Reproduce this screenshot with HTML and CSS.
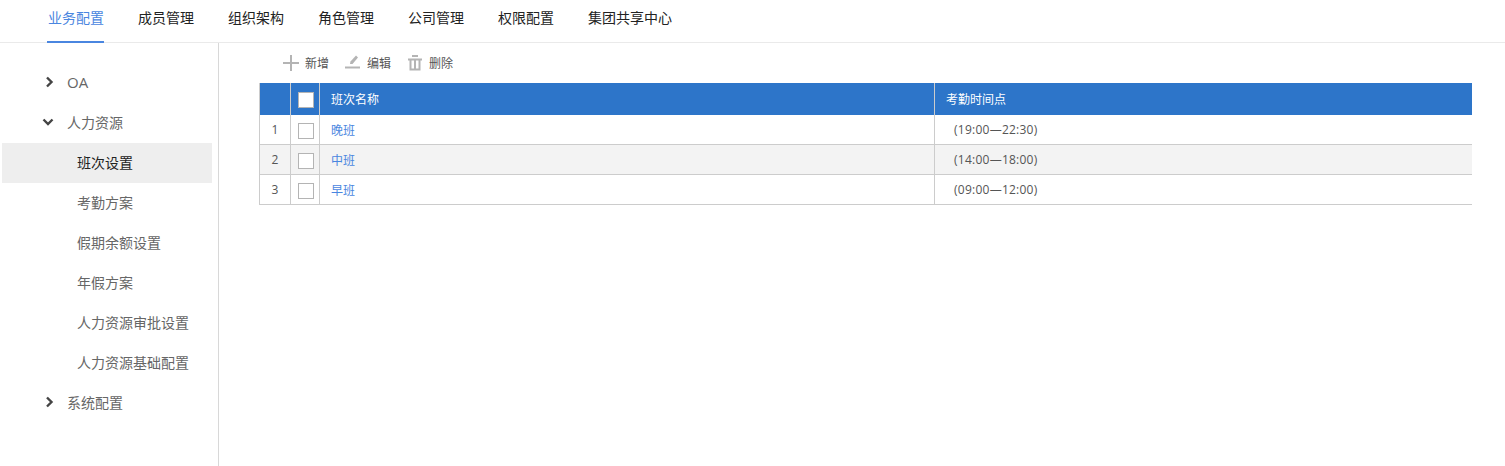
FILE: index.html
```html
<!DOCTYPE html>
<html lang="zh-CN">
<head>
<meta charset="utf-8">
<title>班次设置</title>
<link rel="stylesheet" href="styles.css">
</head>
<body>
<nav class="topnav">
  <a class="tab active">业务配置</a>
  <a class="tab">成员管理</a>
  <a class="tab">组织架构</a>
  <a class="tab">角色管理</a>
  <a class="tab">公司管理</a>
  <a class="tab">权限配置</a>
  <a class="tab">集团共享中心</a>
</nav>
<div class="layout">
  <aside class="sidebar">
    <div class="group"><svg class="chev" viewBox="0 0 12 12"><path d="M3 1.500 7.500 6 3 10.500"/></svg><span class="latin">OA</span></div>
    <div class="group"><svg class="chev down" viewBox="0 0 12 12"><path d="M1.500 3.500 6 8l4.500-4.500"/></svg><span>人力资源</span></div>
    <div class="item selected">班次设置</div>
    <div class="item">考勤方案</div>
    <div class="item">假期余额设置</div>
    <div class="item">年假方案</div>
    <div class="item">人力资源审批设置</div>
    <div class="item">人力资源基础配置</div>
    <div class="group"><svg class="chev" viewBox="0 0 12 12"><path d="M3 1.500 7.500 6 3 10.500"/></svg><span>系统配置</span></div>
  </aside>
  <main class="content">
    <div class="toolbar">
      <button class="tool"><svg viewBox="0 0 16 16"><path d="M8 0v16M0 8h16" class="ln"/></svg>新增</button>
      <button class="tool"><svg viewBox="0 0 16 16"><path d="M0 12.500h15" class="ln"/><path d="M5 9l.5-2.500L11 .5 13 2.500 7.500 9z" class="fl"/></svg>编辑</button>
      <button class="tool"><svg viewBox="0 0 16 16"><path d="M4 1h6M0 4.500h14M2.500 5v9.500h9V5M7 5v9" class="ln"/></svg>删除</button>
    </div>
    <table class="grid">
      <colgroup><col class="c-num"><col class="c-check"><col class="c-name"><col></colgroup>
      <thead>
        <tr><th></th><th class="center"><span class="box head"></span></th><th>班次名称</th><th>考勤时间点</th></tr>
      </thead>
      <tbody>
        <tr><td class="center">1</td><td class="center"><span class="box"></span></td><td><a class="link">晚班</a></td><td class="time">(19:00—22:30)</td></tr>
        <tr class="alt"><td class="center">2</td><td class="center"><span class="box"></span></td><td><a class="link">中班</a></td><td class="time">(14:00—18:00)</td></tr>
        <tr><td class="center">3</td><td class="center"><span class="box"></span></td><td><a class="link">早班</a></td><td class="time">(09:00—12:00)</td></tr>
      </tbody>
    </table>
  </main>
</div>
</body>
</html>
```
FILE: styles.css
```css
* { box-sizing: border-box; }
html, body { height: 100%; }
body {
  margin: 0;
  height: 466px;
  overflow: hidden;
  background: #fff;
  font-family: "Open Sans", "Noto Sans CJK SC", sans-serif;
  font-size: 14px;
  color: #666;
  display: flex;
  flex-direction: column;
}
.topnav {
  height: 43px;
  flex: none;
  display: flex;
  gap: 34px;
  padding-left: 47px;
  border-bottom: 1px solid #eaeaea;
}
.tab {
  height: 43px;
  line-height: 36px;
  padding-left: 1px;
  margin-right: -1px;
  color: #222;
  font-size: 14px;
}
.tab.active {
  color: #4a86e0;
  box-shadow: inset 0 -2px 0 #4a86e0;
}
.layout { flex: 1; display: flex; min-height: 0; }
.sidebar {
  width: 219px;
  flex: none;
  border-right: 1px solid #d8d8d8;
  padding: 20px 6px 0 2px;
}
.group {
  height: 40px;
  display: flex;
  align-items: center;
  padding: 0 0 2px 42px;
  gap: 11px;
  color: #666;
  font-size: 14px;
}
.latin { font-size: 15px; }
.chev { width: 12px; height: 12px; flex: none; }
.chev.down { margin-left: -2px; margin-right: 2px; }
.chev path { fill: none; stroke: #444; stroke-width: 2.4; }
.item {
  height: 40px;
  line-height: 40px;
  padding-left: 75px;
  color: #666;
  font-size: 14px;
}
.item.selected { background: #eee; color: #222; }
.content { flex: 1; min-width: 0; padding: 0 33px 0 40px; }
.toolbar {
  height: 40px;
  display: flex;
  align-items: center;
  padding-left: 24px;
  gap: 17px;
}
.tool {
  display: flex;
  align-items: center;
  gap: 5px;
  padding: 0;
  border: 0;
  background: none;
  font: inherit;
  font-size: 12px;
  color: #555;
}
.tool svg { width: 16px; height: 16px; flex: none; }
.tool:first-child { gap: 6px; }
.tool:nth-child(2) svg { margin-left: -1px; margin-right: 1px; }
.ln { fill: none; stroke: #b4b4b4; stroke-width: 2; }
.fl { fill: #b4b4b4; }
.grid {
  width: 100%;
  table-layout: fixed;
  border-collapse: separate;
  border-spacing: 0;
  font-size: 12px;
}
.c-num { width: 31px; }
.c-check { width: 29px; }
.c-name { width: 615px; }
.grid th {
  height: 32px;
  padding: 0 0 0 11px;
  background: #2d75c9;
  color: #fff;
  font-weight: 400;
  text-align: left;
  border-left: 1px solid #ccc;
}
.grid td {
  height: 30px;
  padding: 0 0 0 11px;
  color: #555;
  border-left: 1px solid #ccc;
  border-bottom: 1px solid #ccc;
}
.grid .center { padding: 0; text-align: center; }
.grid .center .box { margin-left: 1px; }
.grid td .box { margin-top: 2px; }
.alt td { background: #f3f3f3; }
.link { color: #4a86e0; }
.grid .time { padding-left: 19px; color: #555; letter-spacing: .25px; }
.box {
  display: inline-block;
  width: 16px;
  height: 16px;
  vertical-align: middle;
  background: #fff;
  border: 1px solid #b4b4b4;
}
```
